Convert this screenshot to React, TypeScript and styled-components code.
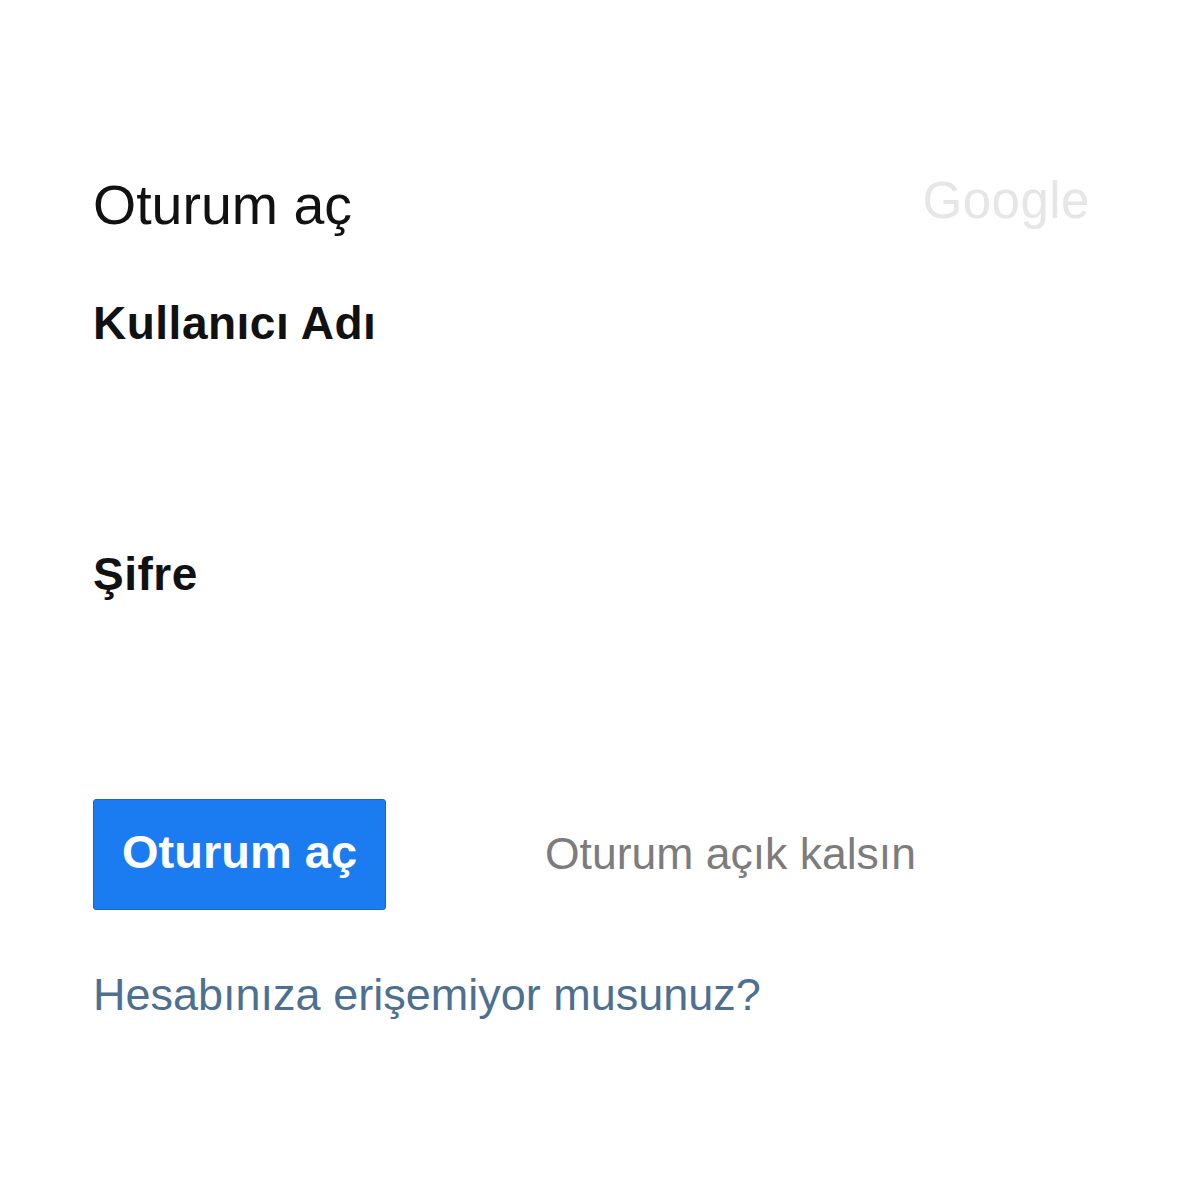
import React, { useState } from 'react'
import styled, { createGlobalStyle } from 'styled-components'

const GlobalStyle = createGlobalStyle`
  html, body {
    margin: 0;
    padding: 0;
    background: #ffffff;
  }
  body {
    font-family: "Liberation Sans", Arial, sans-serif;
  }
`

function App() {
  const [remember, setRemember] = useState(false)
  return (
    <>
      <GlobalStyle />
      <Page>
        <SignInBox>
          <Header>
            <Title>Oturum aç</Title>
            <Brand>Google</Brand>
          </Header>

          <Field>
            <Label htmlFor="user">Kullanıcı Adı</Label>
            <Input id="user" type="email" />
          </Field>

          <Field>
            <Label htmlFor="pass">Şifre</Label>
            <Input id="pass" type="password" />
          </Field>

          <Actions>
            <SubmitButton type="button">Oturum aç</SubmitButton>
            <Remember onClick={() => setRemember(!remember)}>
              Oturum açık kalsın
            </Remember>
          </Actions>

          <HelpLink href="#">Hesabınıza erişemiyor musunuz?</HelpLink>
        </SignInBox>
      </Page>
    </>
  )
}

export default App

const Page = styled.div`
  width: 1200px;
  height: 1200px;
  box-sizing: border-box;
  padding: 178px 0 0 93px;
  background: #fff;
`

const SignInBox = styled.div`
  width: 997px;
  display: flex;
  flex-direction: column;
  align-items: flex-start;
`

const Header = styled.div`
  width: 100%;
  display: flex;
  justify-content: space-between;
  align-items: flex-start;
`

const Title = styled.h2`
  margin: 0;
  font-size: 55.5px;
  line-height: 1;
  font-weight: 400;
  color: #111;
`

const Brand = styled.span`
  margin-top: -3px;
  font-size: 51px;
  line-height: 1;
  color: #e6e6e6;
  letter-spacing: 0.5px;
`

const Field = styled.div`
  width: 100%;
  display: flex;
  flex-direction: column;
  margin-top: 66px;
  & + & {
    margin-top: 0;
  }
`

const Label = styled.label`
  font-size: 46px;
  line-height: 1;
  font-weight: 700;
  letter-spacing: 0.5px;
  color: #111;
`

const Input = styled.input`
  height: 205px;
  border: none;
  outline: none;
  background: transparent;
  padding: 0;
`

const Actions = styled.div`
  display: flex;
  align-items: center;
  margin-top: -3px;
`

const SubmitButton = styled.button`
  width: 293px;
  height: 111px;
  border: 1px solid #1466d6;
  border-radius: 3px;
  background: #1b7bf0;
  color: #fff;
  font-family: "Liberation Sans", Arial, sans-serif;
  font-size: 47px;
  font-weight: 700;
  line-height: 1;
  padding: 0 0 6px;
  cursor: pointer;
`

const Remember = styled.span`
  margin-left: 159px;
  font-size: 44.5px;
  line-height: 1;
  color: #7c7c7c;
  cursor: pointer;
`

const HelpLink = styled.a`
  margin-top: 62px;
  font-size: 45px;
  line-height: 1;
  color: #4e7090;
  text-decoration: none;
`
